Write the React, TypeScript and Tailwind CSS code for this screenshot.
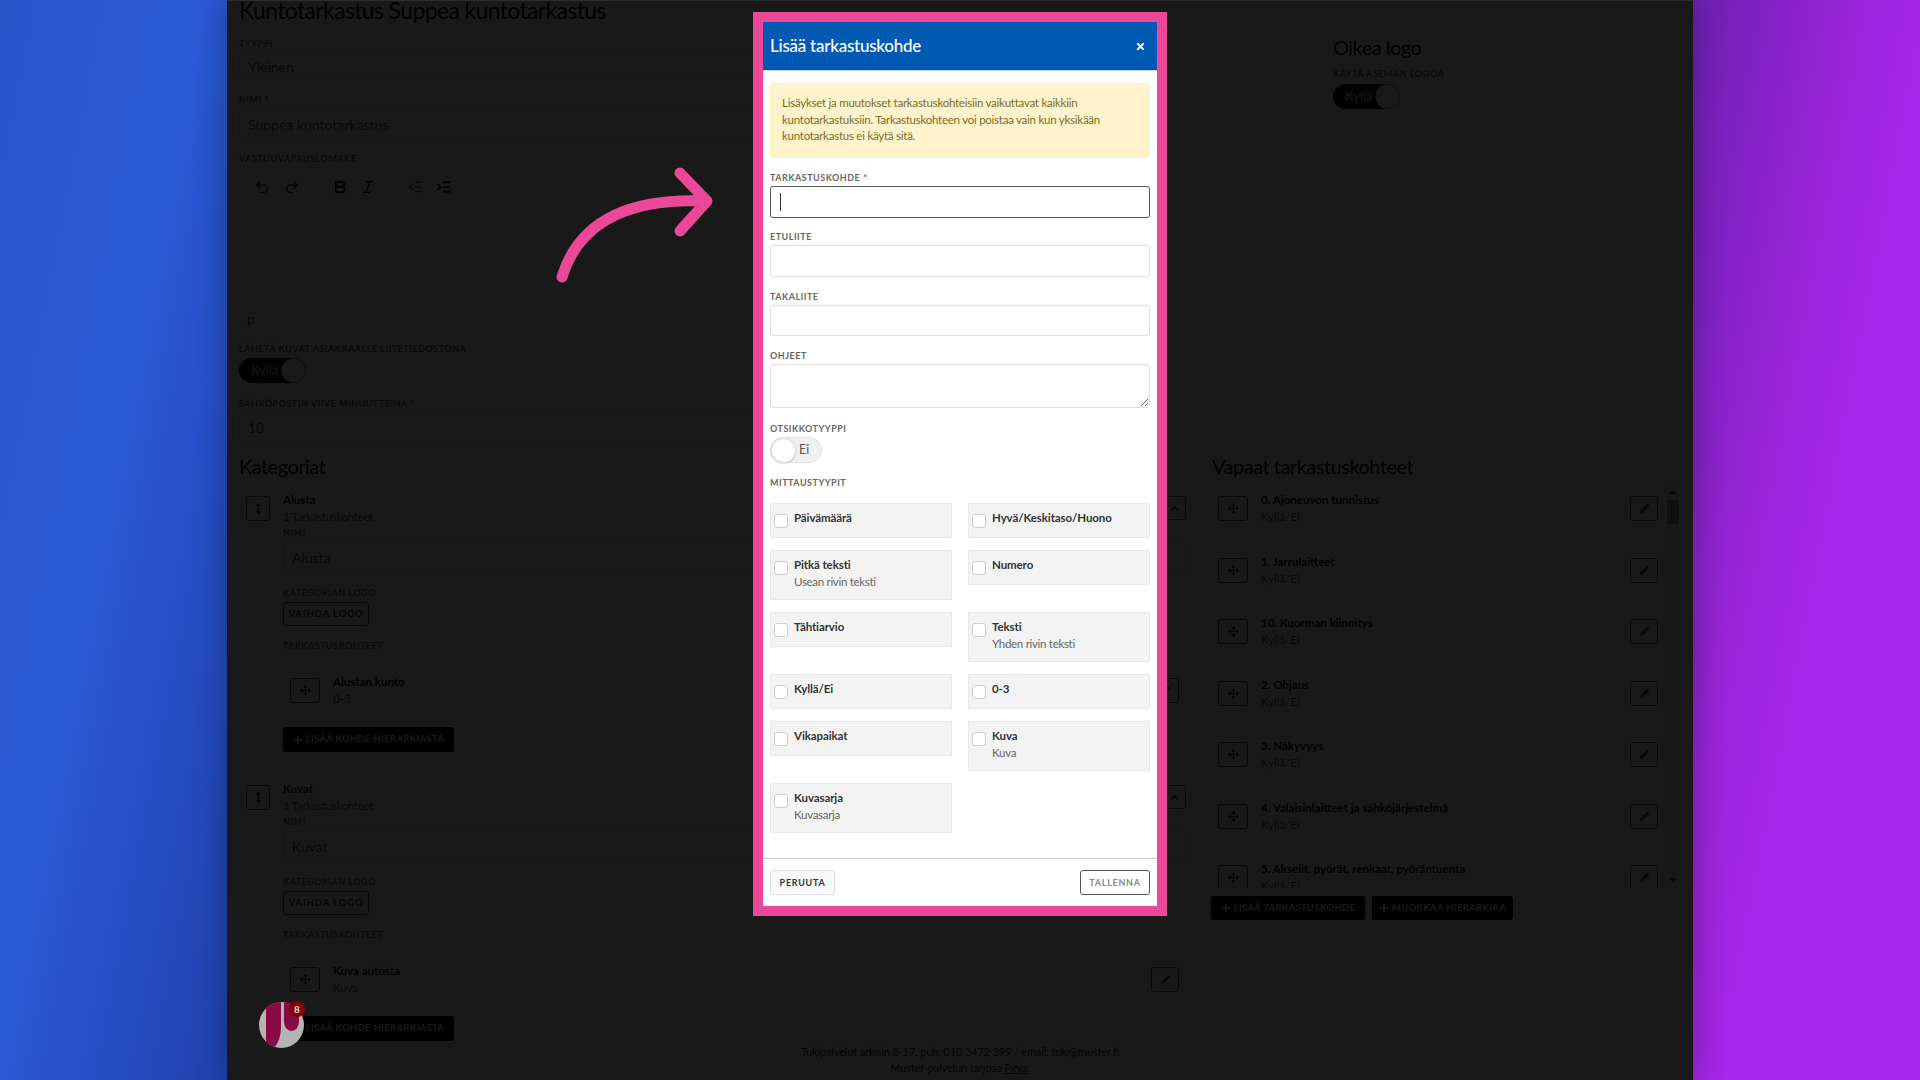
import { Undo2, Redo2, Bold, Italic, IndentDecrease, IndentIncrease } from "lucide-react";
import { FaArrowsAlt, FaArrowsAltV, FaPencilAlt, FaPlus, FaTimes, FaChevronUp } from "react-icons/fa";

const labelClass = "text-[9px] leading-[12px] font-bold uppercase tracking-[0.5px] text-[#666]";
const inputClass = "block w-full border border-[#ddd] rounded-[3px] bg-white px-[8px] text-[14px] text-[#555] outline-none";
const headingClass = "text-[20px] leading-[24px] tracking-[-0.5px] text-black";

const freeItems = [
  "0. Ajoneuvon tunnistus",
  "1. Jarrulaitteet",
  "10. Kuorman kiinnitys",
  "2. Ohjaus",
  "3. Näkyvyys",
  "4. Valaisinlaitteet ja sähköjärjestelmä",
  "5. Akselit, pyörät, renkaat, pyöräntuenta",
];

const measureTypes = [
  { title: "Päivämäärä" },
  { title: "Hyvä/Keskitaso/Huono" },
  { title: "Pitkä teksti", sub: "Usean rivin teksti" },
  { title: "Numero" },
  { title: "Tähtiarvio" },
  { title: "Teksti", sub: "Yhden rivin teksti" },
  { title: "Kyllä/Ei" },
  { title: "0-3" },
  { title: "Vikapaikat" },
  { title: "Kuva", sub: "Kuva" },
  { title: "Kuvasarja", sub: "Kuvasarja" },
];

function Label({ children, className = "" }: { children: React.ReactNode; className?: string }) {
  return <div className={`${labelClass} ${className}`}>{children}</div>;
}

function Required() {
  return <span className="text-[#dc3545] ml-[3px]">*</span>;
}

function Toggle() {
  return (
    <div className="flex items-center justify-between h-[25px] w-[67px] rounded-full bg-black pl-[12px] text-[13px] text-white">
      Kyllä
      <span className="block w-[25px] h-[25px] rounded-full bg-white border border-[#ccc]" />
    </div>
  );
}

function ItemRow({ title, sub }: { title: string; sub: string }) {
  return (
    <div className="flex items-center h-[47px] shrink-0 border border-[#eee] pl-[5px] pr-[6px]">
      <div className="flex items-center justify-center w-[30px] h-[25px] border border-[#555] rounded-[3px] text-[#333]">
        <FaArrowsAlt size={11} />
      </div>
      <div className="ml-[13px] flex-1 min-w-0">
        <div className="text-[11.5px] leading-[14px] font-bold text-black">{title}</div>
        <div className="mt-[3px] text-[11.5px] leading-[14px] text-[#555]">{sub}</div>
      </div>
      <div className="flex items-center justify-center w-[28px] h-[25px] border border-[#555] rounded-[3px] text-[#333]">
        <FaPencilAlt size={9} />
      </div>
    </div>
  );
}

function CategoryCard({ name, itemTitle, itemSub, className }: { name: string; itemTitle: string; itemSub: string; className: string }) {
  return (
    <div className={`flex border border-[#eee] pl-[6px] pr-[8px] pt-[6px] ${className}`}>
      <div className="flex items-center justify-center mt-[3px] w-[24px] h-[25px] border border-[#555] rounded-[3px] text-[#333]">
        <FaArrowsAltV size={11} />
      </div>
      <div className="ml-[13px] flex-1 min-w-0">
        <div className="flex justify-between">
          <div>
            <div className="text-[11.5px] leading-[14px] font-bold text-black">{name}</div>
            <div className="mt-[2px] text-[11.5px] leading-[16px] tracking-[-0.3px] text-[#555]">1 Tarkastuskohteet</div>
          </div>
          <div className="flex items-center justify-center mt-[3px] w-[24px] h-[24px] border border-[#555] rounded-[3px] text-[#333]">
            <FaChevronUp size={9} />
          </div>
        </div>
        <Label className="mt-[2px]">Nimi</Label>
        <input readOnly defaultValue={name} className={`${inputClass} mt-[3px] h-[31px]`} />
        <Label className="mt-[14px]">Kategorian logo</Label>
        <div className="mt-[3px] flex items-center justify-center w-[86px] h-[24px] border border-[#555] rounded-[3px] text-[9.5px] font-bold tracking-[0.9px] text-[#333]">
          VAIHDA LOGO
        </div>
        <Label className="mt-[14px]">Tarkastuskohteet</Label>
        <div className="mt-[15px] ml-px">
          <ItemRow title={itemTitle} sub={itemSub} />
        </div>
        <div className="mt-[13px] flex items-center justify-center gap-[3px] w-[171px] h-[25px] rounded-[3px] bg-black text-[9.5px] font-bold tracking-[0.3px] text-white whitespace-nowrap">
          <FaPlus size={10} />
          LISÄÄ KOHDE HIERARKIASTA
        </div>
      </div>
    </div>
  );
}

function MeasureType({ title, sub }: { title: string; sub?: string }) {
  return (
    <div className="flex gap-[6px] border border-[#e8e8e8] bg-[#f3f3f3] pl-[3px] pt-[7px] pb-[9px]">
      <span className="block mt-[3px] w-[14px] h-[14px] rounded-[3px] border border-[#ccc] bg-white" />
      <div>
        <div className="text-[11.5px] leading-[14px] font-bold tracking-[-0.1px] text-[#333]">{title}</div>
        {sub && <div className="mt-[2px] text-[11.5px] leading-[16px] tracking-[-0.3px] text-[#666]">{sub}</div>}
      </div>
    </div>
  );
}

function PageContent() {
  return (
    <div className="pl-[12px]">
      <div className="flex">
        <div className="w-[1094px]">
          <div className="w-[900px]">
            <h1 className="-mt-[5px] text-[23px] leading-[30px] tracking-[-0.64px] whitespace-nowrap text-black">Kuntotarkastus Suppea kuntotarkastus</h1>
            <Label className="mt-[13px]">Tyyppi</Label>
            <input readOnly defaultValue="Yleinen" className={`${inputClass} mt-[3px] h-[27px]`} />
            <Label className="mt-[14px]">Nimi<Required /></Label>
            <input readOnly defaultValue="Suppea kuntotarkastus" className={`${inputClass} mt-[4px] h-[28px]`} />
            <Label className="mt-[15px]">Vastuuvapauslomake</Label>
            <div className="mt-[3px] flex flex-col h-[160px] border border-[#eee] rounded-[3px]">
              <div className="flex items-center h-[35px] border-b border-[#eee] pl-[14px] pt-[2px] text-[#333]">
                <Undo2 size={16} />
                <Redo2 size={16} className="ml-[14px]" />
                <Bold size={16} strokeWidth={3} className="ml-[32px] text-black" />
                <Italic size={16} className="ml-[12px] text-black" />
                <IndentDecrease size={16} className="ml-[32px] text-[#666]" />
                <IndentIncrease size={16} strokeWidth={2.6} className="ml-[12px] text-black" />
              </div>
              <div className="flex-1" />
              <div className="h-[20px] border-t border-[#eee] pl-[7px] text-[14px] leading-[22px] text-[#555]">p</div>
            </div>
            <Label className="mt-[15px]">Lähetä kuvat asiakkaalle liitetiedostona</Label>
            <div className="mt-[3px]">
              <Toggle />
            </div>
            <Label className="mt-[15px]">Sähköpostin viive minuutteina<Required /></Label>
            <input readOnly defaultValue="10" className={`${inputClass} mt-[3px] h-[29px]`} />
          </div>
        </div>
        <div>
          <h2 className={`mt-[35px] ${headingClass}`}>Oikea logo</h2>
          <Label className="mt-[9px]">Käytä aseman logoa</Label>
          <div className="mt-[4px]">
            <Toggle />
          </div>
        </div>
      </div>

      <div className="flex mt-[12px]">
        <div className="w-[956px]">
          <h2 className={headingClass}>Kategoriat</h2>
          <CategoryCard name="Alusta" itemTitle="Alustan kunto" itemSub="0-3" className="mt-[8px] pb-[6px]" />
          <CategoryCard name="Kuvat" itemTitle="Kuva autosta" itemSub="Kuva" className="mt-[16px] pb-[2px]" />
        </div>
        <div className="ml-[17px] w-[467px]">
          <h2 className={headingClass}>Vapaat tarkastuskohteet</h2>
          <div className="mt-[7px] flex h-[403px] overflow-hidden">
            <div className="flex-1 min-w-0 flex flex-col gap-[14.5px]">
              {freeItems.map((t) => (
                <ItemRow key={t} title={t} sub="Kyllä/Ei" />
              ))}
            </div>
            <div className="ml-[2px] flex flex-col items-center w-[12px] bg-[#f4f4f4]">
              <span className="mt-[5px] w-0 h-0 border-x-[4px] border-x-transparent border-b-[4px] border-b-[#555]" />
              <span className="mt-[6px] w-full h-[24px] bg-[#999]" />
              <span className="mt-auto mb-[6px] w-0 h-0 border-x-[4px] border-x-transparent border-t-[4px] border-t-[#555]" />
            </div>
          </div>
          <div className="mt-[8px] -ml-px flex gap-[7px] text-[9.5px] font-bold tracking-[0.3px] text-white whitespace-nowrap">
            <div className="flex items-center justify-center gap-[3px] w-[154px] h-[24px] rounded-[3px] bg-black">
              <FaPlus size={10} />
              LISÄÄ TARKASTUSKOHDE
            </div>
            <div className="flex items-center justify-center gap-[3px] w-[141px] h-[24px] rounded-[3px] bg-black">
              <FaPlus size={10} />
              MUOKKAA HIERARKIAA
            </div>
          </div>
        </div>
      </div>

      <footer className="-ml-[12px] text-center text-[11px] leading-[16px] tracking-[-0.15px] text-[#333]">
        <div>Tukipalvelut arkisin 8-17, puh: 010 3472 399 / email: tuki@muster.fi</div>
        <div>
          Muster-palvelun tarjoaa <span className="underline">Pinja</span>.
        </div>
      </footer>
    </div>
  );
}

function AddItemModal() {
  return (
    <div className="absolute left-1/2 top-[12px] -translate-x-1/2 flex flex-col w-[414px] h-[904px] border-[10px] border-[#ec4899] bg-white">
      <div className="flex items-center justify-between h-[49px] shrink-0 bg-[#0059b2] border-b border-[#ccc] pl-[7px] pr-[11px] text-white">
        <span className="text-[17px] font-medium tracking-[-0.25px]">Lisää tarkastuskohde</span>
        <FaTimes size={11} />
      </div>
      <div className="px-[7px]">
        <div className="mt-[12px] h-[75px] rounded-[3px] border border-[#ffeeba] bg-[#fff3cd] pl-[11px] pt-[11px] text-[11.5px] leading-[16.5px] tracking-[-0.25px] text-[#806a1e]">
          Lisäykset ja muutokset tarkastuskohteisiin vaikuttavat kaikkiin
          <br />
          kuntotarkastuksiin. Tarkastuskohteen voi poistaa vain kun yksikään
          <br />
          kuntotarkastus ei käytä sitä.
        </div>
        <Label className="mt-[14px]">Tarkastuskohde<Required /></Label>
        <div className="mt-[2px] flex items-center h-[32px] rounded-[3px] border border-[#555] pl-[9px]">
          <span className="block w-px h-[18px] bg-[#333]" />
        </div>
        <Label className="mt-[13px]">Etuliite</Label>
        <input readOnly className={`${inputClass} border-[#ccc] mt-[2px] h-[32px]`} />
        <Label className="mt-[14px]">Takaliite</Label>
        <input readOnly className={`${inputClass} border-[#ccc] mt-[2px] h-[31px]`} />
        <Label className="mt-[14px]">Ohjeet</Label>
        <textarea readOnly className={`${inputClass} border-[#ccc] mt-[2px] h-[44px] resize-y`} />
        <Label className="mt-[15px]">Otsikkotyyppi</Label>
        <div className="mt-[2px] flex items-center w-[52px] h-[26px] rounded-full border border-[#e2e2e2] bg-[#f0f0f0] text-[12.5px] text-[#555]">
          <span className="block w-[25px] h-[25px] rounded-full border border-[#ddd] bg-white shadow-sm" />
          <span className="ml-[3px]">Ei</span>
        </div>
        <Label className="mt-[14px]">Mittaustyypit</Label>
        <div className="mt-[14px] grid grid-cols-2 items-start gap-x-[16px] gap-y-[12px]">
          {measureTypes.map((m) => (
            <MeasureType key={m.title} title={m.title} sub={m.sub} />
          ))}
        </div>
      </div>
      <div className="mt-auto flex items-start justify-between h-[48px] border-t border-[#ccc] px-[7px] pt-[11px] text-[9px] font-bold tracking-[0.7px]">
        <div className="flex items-center justify-center w-[65px] h-[25px] rounded-[3px] border border-[#ddd] bg-[#f8f9fa] text-[#333]">
          PERUUTA
        </div>
        <div className="flex items-center justify-center w-[70px] h-[25px] rounded-[3px] border border-[#555] bg-white text-[#888]">
          TALLENNA
        </div>
      </div>
    </div>
  );
}

function CurvedArrow() {
  return (
    <svg className="absolute left-[540px] top-[150px]" width="200" height="150" viewBox="0 0 200 150" fill="none">
      <path
        d="M22 127C35 85 70 48 162 51M140 23L167 51L140 81"
        stroke="#ec4899"
        strokeWidth="11"
        strokeLinecap="round"
        strokeLinejoin="round"
      />
    </svg>
  );
}

function ChatWidget() {
  return (
    <div className="absolute left-[259px] top-[1002px] w-[45px] h-[46px]">
      <svg width="45" height="46" viewBox="0 0 45 46">
        <clipPath id="widget-clip">
          <ellipse cx="22.5" cy="23" rx="22.5" ry="23" />
        </clipPath>
        <g clipPath="url(#widget-clip)">
          <rect width="45" height="46" fill="#b4b4b4" />
          <path d="M7 0H22V25Q22 38 15 46H7Z" fill="#8a0a45" />
          <path d="M25 0H40V20A7.5 9 0 0 1 25 20Z" fill="#8a0a45" />
        </g>
      </svg>
      <div className="absolute left-[30px] -top-[1px] flex items-center justify-center w-[16px] h-[16px] rounded-full bg-[#8b0000] text-[10px] font-bold text-[#ddd]">
        8
      </div>
    </div>
  );
}

export default function App() {
  return (
    <div className="relative flex justify-center h-screen w-full overflow-hidden font-['Lato',sans-serif] bg-[linear-gradient(101deg,#2657c9_0%,#2a5bd7_9%,#2142b0_20%,#7020b5_80%,#9825d8_87%,#a726eb_91%,#a726eb_100%)]">
      <div className="relative w-[1466px] h-full overflow-hidden bg-white shadow-[0_0_30px_rgba(0,0,0,0.3)]">
        <PageContent />
        <div className="absolute inset-0 border-t border-[#2c2c2c] bg-black/90" />
      </div>
      <ChatWidget />
      <CurvedArrow />
      <AddItemModal />
    </div>
  );
}
